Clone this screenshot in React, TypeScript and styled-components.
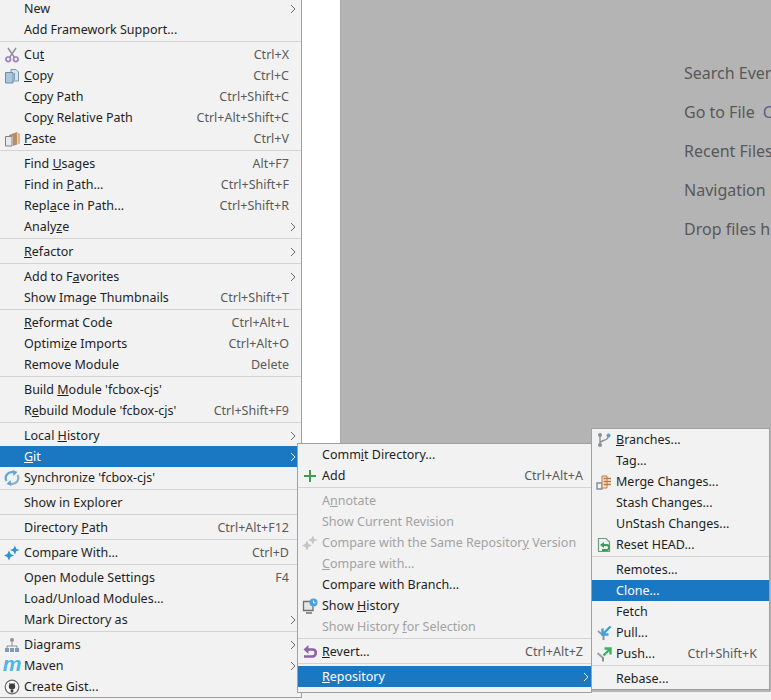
import React from 'react';
import styled, { createGlobalStyle } from 'styled-components';

const GlobalStyle = createGlobalStyle`
  html, body {
    margin: 0;
    padding: 0;
    background: #fff;
    overflow: hidden;
  }
`;

const Icons: Record<string, React.ReactNode> = {
  cut: (
    <>
      <path d="M4 1l6.500 9.500M12 1L5.500 10.500" stroke="#8f8f98" strokeWidth="1.400" fill="none" />
      <circle cx="4.200" cy="12.300" r="2.300" stroke="#a07fbd" strokeWidth="1.700" fill="none" />
      <circle cx="11.800" cy="12.300" r="2.300" stroke="#a07fbd" strokeWidth="1.700" fill="none" />
    </>
  ),
  copy: (
    <>
      <path d="M7 1.500h5l2.500 2.500v9H7z" fill="#d6e3ee" stroke="#7d98ad" />
      <path d="M1.500 4.500H9v10.500H1.500z" fill="#a9c6dd" stroke="#6f8da6" />
      <path d="M10.500 5v7" stroke="#7d98ad" />
    </>
  ),
  paste: (
    <>
      <path d="M1.500 5.500H8V15H1.500z" fill="#e9e9e9" stroke="#80807c" />
      <path d="M5 4l8-3v12.500L9 15V5.500H5z" fill="#b98c62" />
      <path d="M13.500 1.500L16 2.500v10l-2.500 1z" fill="#d9b48e" />
    </>
  ),
  sync: (
    <>
      <path d="M2.500 11A6 6 0 0 1 9 2.200" stroke="#62a6d6" strokeWidth="2.200" fill="none" />
      <path d="M13.500 5A6 6 0 0 1 7 13.800" stroke="#8fb0c8" strokeWidth="2.200" fill="none" />
      <path d="M8.500 0l5 2-4 4zM7.500 16l-5-2 4-4z" fill="#62a6d6" />
    </>
  ),
  compare: (
    <>
      <path d="M11 0.500l1.200 3.300 3.300 1.200-3.300 1.200L11 9.500 9.300 6.200 6 5l3.300-1.200z" fill="#2f93d6" />
      <path d="M5 5.500l1.500 3.500 3.500 1.500-3.500 1.500L5 15.500 3.300 12 0 10.500 3.300 9z" fill="#2f93d6" />
    </>
  ),
  compareOff: (
    <>
      <path d="M11 0.500l1.200 3.300 3.300 1.200-3.300 1.200L11 9.500 9.300 6.200 6 5l3.300-1.200z" fill="#c4c4c4" />
      <path d="M5 5.500l1.500 3.500 3.500 1.500-3.500 1.500L5 15.500 3.300 12 0 10.500 3.300 9z" fill="#c4c4c4" />
    </>
  ),
  diagrams: (
    <>
      <circle cx="8" cy="3" r="2" fill="#8c8f94" />
      <path d="M8 5v4M3 11V9h10v2" stroke="#8c8f94" fill="none" />
      <path d="M1 11h4v4H1zM6 11h4v4H6zM11 11h4v4h-4z" fill="#7f9ab5" />
    </>
  ),
  gist: (
    <>
      <circle cx="8" cy="8" r="6.800" stroke="#6a6a6a" strokeWidth="1.200" fill="#f7f7f7" />
      <path d="M4.800 7.800c0-.9.200-1.500.5-2L5.200 4l1.700.7c.7-.2 1.500-.2 2.200 0L10.800 4l-.100 1.800c.3.5.5 1.100.5 2 0 1.800-1.200 2.700-3.200 2.700s-3.200-.9-3.200-2.700z" fill="#3d3d3d" />
      <path d="M6.700 10.500h2.600v3H6.700z" fill="#3d3d3d" />
    </>
  ),
  add: <path d="M8 2v12M2 8h12" stroke="#3f9b52" strokeWidth="2" fill="none" />,
  history: (
    <>
      <path d="M1.500 3.500H11v9H1.500z" fill="#e6e6e6" stroke="#6f6f6f" strokeWidth="1.300" />
      <path d="M4 15h6" stroke="#6f6f6f" strokeWidth="1.500" />
      <circle cx="11.500" cy="4.500" r="4" fill="#4f9fdc" />
      <path d="M11.500 2.500v2.300h2" stroke="#fff" fill="none" />
    </>
  ),
  revert: (
    <>
      <path d="M5 5.500h5.500c2 0 3.300 1.300 3.300 3.300s-1.300 3.700-3.300 3.700H2" stroke="#8d62a8" strokeWidth="2.600" fill="none" />
      <path d="M6.500 1L1.500 5.500l5 4.500z" fill="#8d62a8" />
    </>
  ),
  branches: (
    <>
      <path d="M4 4v8M4 11c0-3 8-2 8-6" stroke="#8c8f94" strokeWidth="1.400" fill="none" />
      <circle cx="4" cy="3" r="2" fill="#8c8f94" />
      <circle cx="4" cy="13" r="2" fill="#8c8f94" />
      <circle cx="12.500" cy="3.500" r="2" fill="#4f9fdc" />
    </>
  ),
  merge: (
    <>
      <path d="M1 9h5v6H1z" fill="none" stroke="#7f8c99" strokeWidth="1.400" />
      <path d="M6 2h5v12H6z" fill="#f3e3d3" stroke="#c27a3c" />
      <path d="M7.500 4.500H15M7.500 7.500H15M7.500 10.500H15" stroke="#c27a3c" strokeWidth="1.300" />
    </>
  ),
  reset: (
    <>
      <path d="M2.500 1.500H10l3.500 3.500v9.500h-11z" fill="none" stroke="#6f9a7c" strokeWidth="1.200" />
      <path d="M7 8h3.500a2.500 2.500 0 0 1 0 5H6" stroke="#3c9c55" strokeWidth="1.800" fill="none" />
      <path d="M8 5L4 8l4 3z" fill="#3c9c55" />
    </>
  ),
  pull: (
    <>
      <path d="M2 6l5 4.500" stroke="#8fa0ad" strokeWidth="1.800" />
      <path d="M7.500 10v5" stroke="#8f8f98" strokeWidth="2" />
      <path d="M14.500 1.500L8 8M6.500 3.500v6h6" stroke="#3d9fe0" strokeWidth="2.400" fill="none" />
    </>
  ),
  push: (
    <>
      <path d="M1.500 7l5 4.500" stroke="#8fa0ad" strokeWidth="1.800" />
      <path d="M7 11v4.500" stroke="#8f8f98" strokeWidth="2" />
      <path d="M7.500 9.500L14 3M8.500 2.500h6v6" stroke="#3fae6a" strokeWidth="2.400" fill="none" />
    </>
  ),
};

type Item =
  | 'sep'
  | {
      label: string;
      icon?: string;
      keys?: string;
      arrow?: boolean;
      off?: boolean;
      active?: boolean;
    };

const mainItems: Item[] = [
  { label: 'New', arrow: true },
  { label: 'Add Framework Support...' },
  'sep',
  { label: 'Cu&t', icon: 'cut', keys: 'Ctrl+X' },
  { label: '&Copy', icon: 'copy', keys: 'Ctrl+C' },
  { label: 'C&opy Path', keys: 'Ctrl+Shift+C' },
  { label: 'Cop&y Relative Path', keys: 'Ctrl+Alt+Shift+C' },
  { label: '&Paste', icon: 'paste', keys: 'Ctrl+V' },
  'sep',
  { label: 'Find &Usages', keys: 'Alt+F7' },
  { label: 'Find in &Path...', keys: 'Ctrl+Shift+F' },
  { label: 'Repl&ace in Path...', keys: 'Ctrl+Shift+R' },
  { label: 'Analy&ze', arrow: true },
  'sep',
  { label: '&Refactor', arrow: true },
  'sep',
  { label: 'Add to F&avorites', arrow: true },
  { label: 'Show Image Thumbnails', keys: 'Ctrl+Shift+T' },
  'sep',
  { label: '&Reformat Code', keys: 'Ctrl+Alt+L' },
  { label: 'Optimi&ze Imports', keys: 'Ctrl+Alt+O' },
  { label: 'Remove Module', keys: 'Delete' },
  'sep',
  { label: "Build &Module 'fcbox-cjs'" },
  { label: "R&ebuild Module 'fcbox-cjs'", keys: 'Ctrl+Shift+F9' },
  'sep',
  { label: 'Local &History', arrow: true },
  { label: '&Git', arrow: true, active: true },
  { label: "Synchronize 'fcbox-cjs'", icon: 'sync' },
  'sep',
  { label: 'Show in Explorer' },
  'sep',
  { label: 'Directory &Path', keys: 'Ctrl+Alt+F12' },
  'sep',
  { label: 'Compare With...', icon: 'compare', keys: 'Ctrl+D' },
  'sep',
  { label: 'Open Module Settings', keys: 'F4' },
  { label: 'Load/Unload Modules...' },
  { label: 'Mark Directory as', arrow: true },
  'sep',
  { label: 'Diagrams', icon: 'diagrams', arrow: true },
  { label: 'Maven', icon: 'maven', arrow: true },
  { label: 'Create Gist...', icon: 'gist' },
];

const gitItems: Item[] = [
  { label: 'Comm&it Directory...' },
  { label: 'Add', icon: 'add', keys: 'Ctrl+Alt+A' },
  'sep',
  { label: 'A&nnotate', off: true },
  { label: 'Show Current Revision', off: true },
  { label: 'Compare with the Same Repositor&y Version', icon: 'compareOff', off: true },
  { label: '&Compare with...', off: true },
  { label: 'Compare with Branch...' },
  { label: 'Show &History', icon: 'history' },
  { label: 'Show History &for Selection', off: true },
  'sep',
  { label: '&Revert...', icon: 'revert', keys: 'Ctrl+Alt+Z' },
  'sep',
  { label: '&Repository', arrow: true, active: true },
];

const repoItems: Item[] = [
  { label: '&Branches...', icon: 'branches' },
  { label: 'Tag...' },
  { label: 'Merge Changes...', icon: 'merge' },
  { label: 'Stash Changes...' },
  { label: 'UnStash Changes...' },
  { label: 'Reset HEAD...', icon: 'reset' },
  'sep',
  { label: 'Remotes...' },
  { label: 'Clone...', active: true },
  { label: 'Fetch' },
  { label: 'Pull...', icon: 'pull' },
  { label: 'Push...', icon: 'push', keys: 'Ctrl+Shift+K' },
  'sep',
  { label: 'Rebase...' },
];

const renderLabel = (label: string) => {
  const at = label.indexOf('&');
  if (at < 0) return label;
  return (
    <>
      {label.slice(0, at)}
      <u>{label[at + 1]}</u>
      {label.slice(at + 2)}
    </>
  );
};

type ContextMenuProps = {
  items: Item[];
  left: number;
  top: number;
  width: number;
  keyPad: number;
  arrowPad: number;
  bottomPad?: number;
};

const ContextMenu = ({ items, left, top, width, keyPad, arrowPad, bottomPad = 0 }: ContextMenuProps) => {
  return (
    <Menu $left={left} $top={top} $width={width} $bottomPad={bottomPad}>
      {items.map((item, idx) => {
        if (item === 'sep') return <Separator key={idx} />;

        return (
          <Row key={idx} $active={item.active} $off={item.off} $pad={item.arrow ? arrowPad : keyPad}>
            <IconSlot>
              {item.icon === 'maven' ? (
                <MavenMark>m</MavenMark>
              ) : item.icon ? (
                <svg width="16" height="16" viewBox="0 0 16 16">
                  {Icons[item.icon]}
                </svg>
              ) : null}
            </IconSlot>
            <Label>{renderLabel(item.label)}</Label>
            {item.keys && <Keys>{item.keys}</Keys>}
            {item.arrow && (
              <Arrow $active={item.active} width="6" height="10" viewBox="0 0 6 10">
                <path d="M1 1l4 4-4 4" fill="none" stroke="currentColor" />
              </Arrow>
            )}
          </Row>
        );
      })}
    </Menu>
  );
};

const App = () => {
  return (
    <Page>
      <GlobalStyle />
      <Workspace>
        <Sidebar />
        <Editor>
          <Hint>Search Everywhere Double Shift</Hint>
          <Hint>
            Go to File <HintKey>Ctrl+Shift+N</HintKey>
          </Hint>
          <Hint>Recent Files Ctrl+E</Hint>
          <Hint>Navigation Bar Alt+Home</Hint>
          <Hint>Drop files here to open</Hint>
        </Editor>
      </Workspace>
      <BottomStrip />

      <ContextMenu items={mainItems} left={-1} top={-3} width={303} keyPad={12} arrowPad={5} />
      <ContextMenu items={gitItems} left={297} top={443} width={295} keyPad={8} arrowPad={2} bottomPad={5} />
      <ContextMenu items={repoItems} left={591} top={428} width={179} keyPad={12} arrowPad={5} />
    </Page>
  );
};

const Page = styled.div`
  position: relative;
  width: 771px;
  height: 700px;
  overflow: hidden;
  display: flex;
  flex-direction: column;
  font-family: 'Noto Sans', 'Open Sans', sans-serif;
`;

const Workspace = styled.div`
  display: flex;
  height: 692px;
`;

const Sidebar = styled.div`
  width: 340px;
  background: #fff;
`;

const Editor = styled.div`
  flex: 1;
  min-width: 0;
  box-sizing: border-box;
  padding: 54px 0 0 343px;
  background: #b4b4b4;
  border-left: 1px solid #a9a9a9;
`;

const Hint = styled.div`
  height: 39px;
  line-height: 39px;
  font-size: 16px;
  color: #585858;
  white-space: nowrap;
`;

const HintKey = styled.span`
  margin-left: 4px;
  color: #5f5f86;
`;

const BottomStrip = styled.div`
  flex: 1;
  background: #f2f2f2;
`;

const Menu = styled.div<{ $left: number; $top: number; $width: number; $bottomPad: number }>`
  position: absolute;
  left: ${p => p.$left}px;
  top: ${p => p.$top}px;
  width: ${p => p.$width}px;
  box-sizing: border-box;
  padding-bottom: ${p => p.$bottomPad}px;
  background: #f2f2f2;
  border: 1px solid #a0a0a0;
`;

const Separator = styled.div`
  height: 4px;
  box-sizing: border-box;
  padding-top: 1px;

  &::after {
    content: '';
    display: block;
    height: 1px;
    background: #d3d3d3;
  }
`;

const Row = styled.div<{ $active?: boolean; $off?: boolean; $pad: number }>`
  display: flex;
  align-items: center;
  height: 21px;
  padding: 0 ${p => p.$pad}px 0 4px;
  font-size: 12.5px;
  white-space: nowrap;
  color: ${p => (p.$active ? '#fff' : p.$off ? '#a2a2a2' : '#1e1e1e')};
  background: ${p => (p.$active ? '#1a77c2' : 'transparent')};
`;

const IconSlot = styled.span`
  display: flex;
  align-items: center;
  justify-content: center;
  flex: none;
  width: 16px;
  height: 16px;
  margin-right: 4px;
`;

const MavenMark = styled.span`
  font-family: 'Liberation Sans', sans-serif;
  font-size: 21px;
  line-height: 16px;
  font-style: italic;
  font-weight: 700;
  color: #4fb6e8;
  transform: translateY(-2px);
`;

const Label = styled.span`
  flex: 1;
`;

const Keys = styled.span`
  color: #5a5a5a;
`;

const Arrow = styled.svg<{ $active?: boolean }>`
  flex: none;
  color: ${p => (p.$active ? '#fff' : '#6a6a6a')};
`;

export default App;
